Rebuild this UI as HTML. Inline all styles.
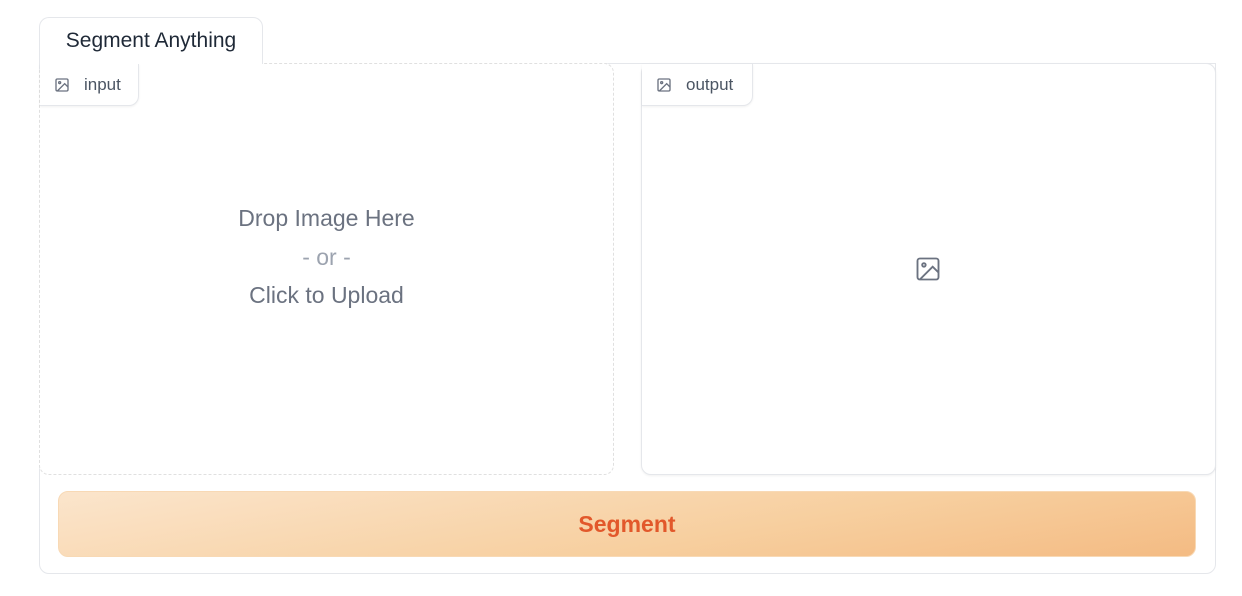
<!DOCTYPE html>
<html><head><style>
body{margin:0;background:#fff;font-family:"Liberation Sans",sans-serif;width:1242px;height:596px;position:relative;overflow:hidden}
.abs{position:absolute;box-sizing:border-box}
.tab{left:39px;top:17px;width:224px;height:47px;border:1px solid #e5e7eb;border-bottom:none;border-radius:10px 10px 0 0;background:#fff;font-size:21px;color:#1f2937;text-align:center;line-height:46px;z-index:2}
.panel{left:39px;top:63px;width:1177px;height:511px;border:1px solid #e5e7eb;border-radius:0 0 10px 10px}
.box{top:63px;height:412px;width:575px;border-radius:10px;background:#fff}
.lbl{height:42px;border:1px solid #e5e7eb;border-top:none;border-left:none;border-radius:0 0 10px 0;box-shadow:0 1px 2px rgba(0,0,0,.06);font-size:17px;color:#4b5563;line-height:42px;padding-left:44px;background:#fff}
.lbl svg{position:absolute;left:14px;top:13px}
.btn{left:58px;top:491px;width:1138px;height:66px;border-radius:10px;border:1px solid #f8d9b5;background:linear-gradient(170deg,#fbe5cc 0%,#f7cf9f 60%,#f4bb83 100%);color:#e2582b;font-weight:bold;font-size:23px;text-align:center;line-height:64px}
.t{position:absolute;width:100%;text-align:center;color:#6b7280;font-size:23px}
</style></head><body>
<div class="abs tab">Segment Anything</div>
<div class="abs panel"></div>
<div class="abs box" style="left:39px;border:1px dashed #e0e0e0">
 <div class="abs lbl" style="left:0;top:0;width:99px"><svg width="16" height="16" viewBox="0 0 24 24" fill="none" stroke="#6b7280" stroke-width="2"><rect x="3" y="3" width="18" height="18" rx="2"/><circle cx="8.5" cy="8.5" r="1.5"/><path d="M21 15l-5-5L5 21"/></svg>input</div>
 <div class="t" style="top:141px">Drop Image Here</div>
 <div class="t" style="top:180px;color:#9ca3af">- or -</div>
 <div class="t" style="top:218px">Click to Upload</div>
</div>
<div class="abs box" style="left:641px;border:1px solid #e5e7eb;box-shadow:0 1px 2px rgba(0,0,0,.06)">
 <div class="abs lbl" style="left:0;top:0;width:111px"><svg width="16" height="16" viewBox="0 0 24 24" fill="none" stroke="#6b7280" stroke-width="2"><rect x="3" y="3" width="18" height="18" rx="2"/><circle cx="8.5" cy="8.5" r="1.5"/><path d="M21 15l-5-5L5 21"/></svg>output</div>
 <svg style="position:absolute;left:272px;top:191px" width="28" height="28" viewBox="0 0 24 24" fill="none" stroke="#6b7280" stroke-width="1.6"><rect x="3" y="3" width="18" height="18" rx="2"/><circle cx="8.5" cy="8.5" r="1.5"/><path d="M21 15l-5-5L5 21"/></svg>
</div>
<div class="abs btn">Segment</div>
</body></html>
